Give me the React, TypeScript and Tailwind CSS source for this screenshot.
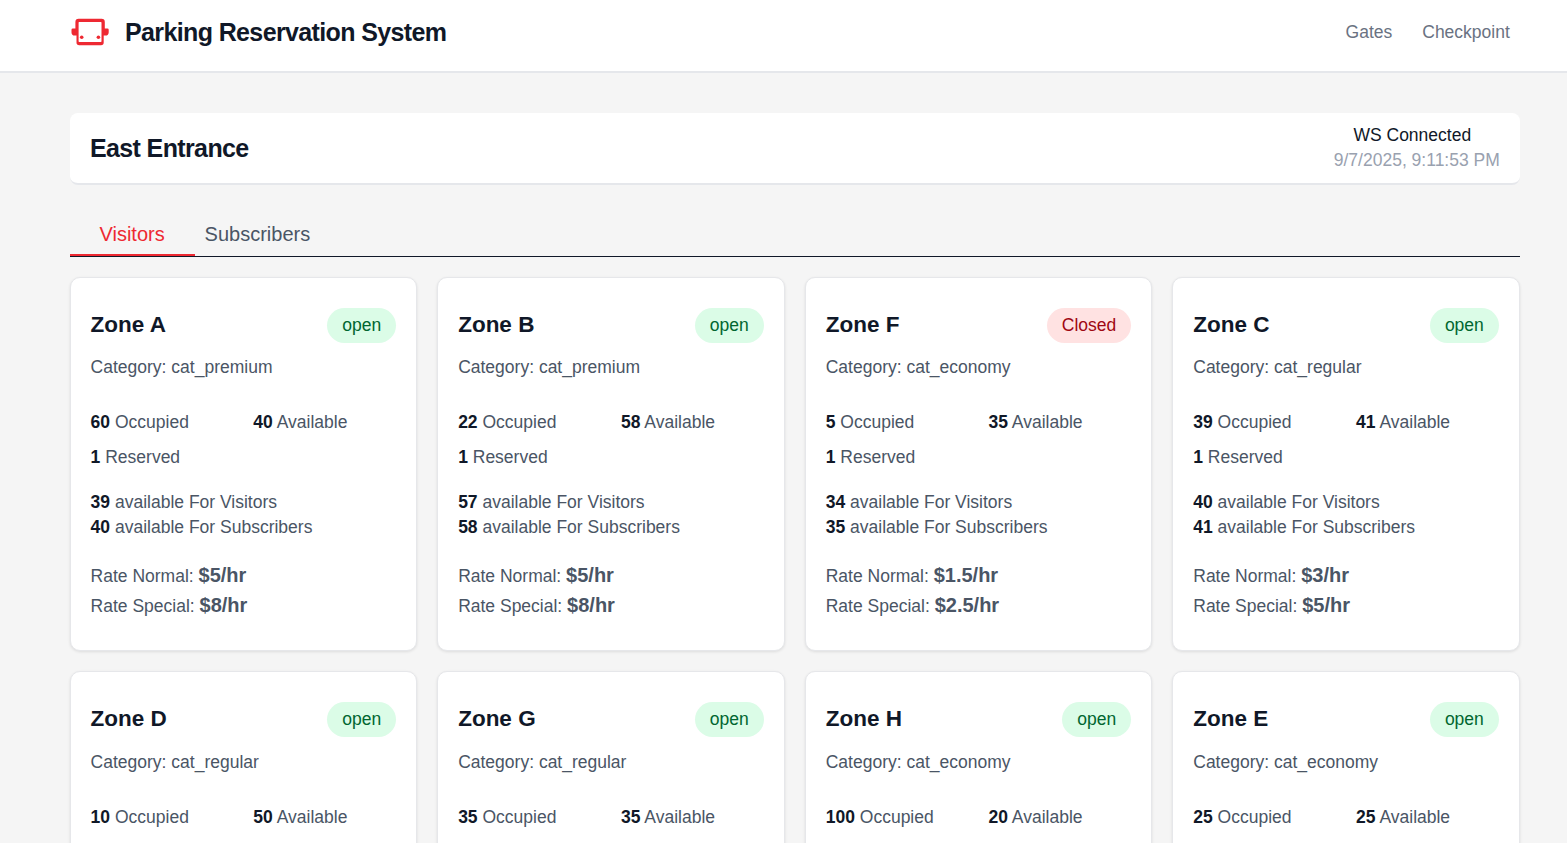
type Zone = {
  name: string;
  category: string;
  open: boolean;
  occupied: number;
  available: number;
  reserved: number;
  visitors: number;
  subscribers: number;
  normal: string;
  special: string;
};

const zones: Zone[] = [
  { name: "Zone A", category: "cat_premium", open: true, occupied: 60, available: 40, reserved: 1, visitors: 39, subscribers: 40, normal: "5", special: "8" },
  { name: "Zone B", category: "cat_premium", open: true, occupied: 22, available: 58, reserved: 1, visitors: 57, subscribers: 58, normal: "5", special: "8" },
  { name: "Zone F", category: "cat_economy", open: false, occupied: 5, available: 35, reserved: 1, visitors: 34, subscribers: 35, normal: "1.5", special: "2.5" },
  { name: "Zone C", category: "cat_regular", open: true, occupied: 39, available: 41, reserved: 1, visitors: 40, subscribers: 41, normal: "3", special: "5" },
  { name: "Zone D", category: "cat_regular", open: true, occupied: 10, available: 50, reserved: 1, visitors: 49, subscribers: 50, normal: "3", special: "5" },
  { name: "Zone G", category: "cat_regular", open: true, occupied: 35, available: 35, reserved: 1, visitors: 34, subscribers: 35, normal: "3", special: "5" },
  { name: "Zone H", category: "cat_economy", open: true, occupied: 100, available: 20, reserved: 1, visitors: 19, subscribers: 20, normal: "1.5", special: "2.5" },
  { name: "Zone E", category: "cat_economy", open: true, occupied: 25, available: 25, reserved: 1, visitors: 24, subscribers: 25, normal: "1.5", special: "2.5" },
];

function Logo() {
  return (
    <svg className="h-[30px] w-10" viewBox="0 0 40 30" fill="#ee2932">
      <path
        fillRule="evenodd"
        d="M8.600 1.700h23a3.200 3.200 0 0 1 3.200 3.200v6.500h2.600a1.300 1.300 0 0 1 1.300 1.300v2.700a3.300 3.300 0 0 1-3.200 3.200h-1.800v7a2.700 2.700 0 0 1-2.700 2.700h-21.800a2.700 2.700 0 0 1-2.700-2.700V18.600h-1.800a3.300 3.300 0 0 1-3.200-3.200v-2.700A1.300 1.300 0 0 1 2.800 11.400h2.600V4.900a3.200 3.200 0 0 1 3.200-3.200zM9.200 5a.6.6 0 0 0-.6.600v18.700a.6.6 0 0 0 .6.600h21.700a.6.6 0 0 0 .6-.600V5.600a.6.6 0 0 0-.6-.600z"
      />
      <circle cx="11.700" cy="20.200" r="1.800" />
      <circle cx="28.400" cy="20.200" r="1.800" />
    </svg>
  );
}

function Count({ value, label }: { value: number; label: string }) {
  return (
    <div>
      <span className="font-bold text-gray-900">{value}</span> {label}
    </div>
  );
}

function ZoneCard({ zone }: { zone: Zone }) {
  return (
    <article className="h-[374.4px] rounded-[10px] border border-[#e6e7ea] bg-white px-5 pt-[30px] text-[17.5px] leading-[25px] text-gray-600 shadow-[0_1px_3px_rgba(0,0,0,0.10)]">
      <div className="flex items-start justify-between">
        <h3 className="text-[22.5px] leading-[33px] font-bold text-gray-900">{zone.name}</h3>
        {zone.open ? (
          <span className="rounded-full bg-green-100 px-[15px] py-[5px] text-green-800">open</span>
        ) : (
          <span className="rounded-full bg-[#ffe2e2] px-[15px] py-[5px] text-[#9f0712]">Closed</span>
        )}
      </div>
      <p className="mt-[12.2px]">Category: {zone.category}</p>
      <div className="mt-[30px] grid grid-cols-2 gap-x-5 gap-y-2.5">
        <Count value={zone.occupied} label="Occupied" />
        <Count value={zone.available} label="Available" />
        <Count value={zone.reserved} label="Reserved" />
      </div>
      <div className="mt-5">
        <Count value={zone.visitors} label="available For Visitors" />
        <Count value={zone.subscribers} label="available For Subscribers" />
      </div>
      <div className="mt-[19.8px] leading-[30px]">
        <p className="h-[30px]">
          Rate Normal: <span className="text-[20px] font-bold">${zone.normal}/hr</span>
        </p>
        <p className="h-[30px]">
          Rate Special: <span className="text-[20px] font-bold">${zone.special}/hr</span>
        </p>
      </div>
    </article>
  );
}

export default function App() {
  return (
    <div className="h-[843px] overflow-hidden bg-[#f5f5f5] font-['Liberation_Sans',Arial,sans-serif] text-[17.5px] leading-[25px] text-gray-900">
      <header className="flex h-[73px] items-center justify-between border-b-2 border-gray-200 bg-white pr-[57.2px] pb-[7px] pl-[70px]">
        <div className="flex items-center gap-[15px]">
          <Logo />
          <h1 className="text-[25px] leading-[35px] font-bold tracking-[-0.625px]">Parking Reservation System</h1>
        </div>
        <nav className="flex gap-[30px] text-gray-500">
          <a>Gates</a>
          <a>Checkpoint</a>
        </nav>
      </header>
      <main className="pt-10 pr-[47.2px] pl-[69.6px]">
        <section className="flex h-[72px] items-center justify-between rounded-[8px] border-b-2 border-gray-200 bg-white pr-5 pl-[20.4px]">
          <h2 className="text-[25px] leading-[35px] font-bold tracking-[-0.625px]">East Entrance</h2>
          <div className="text-center">
            <p className="pr-[9px]">WS Connected</p>
            <p className="text-gray-400">9/7/2025, 9:11:53 PM</p>
          </div>
        </section>
        <div className="mt-[29px] flex h-[43px] border-b border-gray-900 text-[20px] leading-[40px] text-gray-600">
          <button className="w-[125px] border-b-2 border-[#ee2932] text-[#ee2932]">Visitors</button>
          <button className="px-2.5 pb-0.5">Subscribers</button>
        </div>
        <div className="mt-5 grid grid-cols-4 gap-5">
          {zones.map((zone) => (
            <ZoneCard key={zone.name} zone={zone} />
          ))}
        </div>
      </main>
    </div>
  );
}
